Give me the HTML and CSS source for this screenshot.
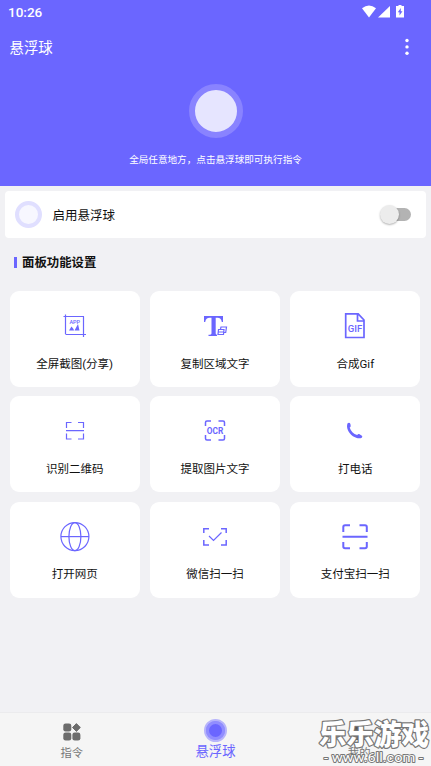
FILE: index.html
```html
<!DOCTYPE html>
<html lang="zh-CN">
<head>
<meta charset="utf-8">
<title>悬浮球</title>
<link rel="stylesheet" href="styles.css">
</head>
<body>
<div class="app">
  <header class="header">
    <div class="status">
      <span class="time">10:26</span>
      <svg class="status-icons" width="46" height="14" viewBox="0 0 46 14" fill="#fff">
        <path d="M0 3.200Q7-2.400 14 3.200L7 12.500z"/><path d="M28 1v11.500H16z"/>
        <path fill-rule="evenodd" d="M36.500 0h3v1H42v11.500h-8V1h2.500zM38.800 3l-3 4.300h1.700v3.200l3-4.300h-1.700z"/>
      </svg>
    </div>
    <div class="toolbar">
      <h1 class="title">悬浮球</h1>
      <svg class="more" width="4" height="18" viewBox="0 0 4 18" fill="#fff"><circle cx="2" cy="2.500" r="1.700"/><circle cx="2" cy="8.900" r="1.700"/><circle cx="2" cy="15.300" r="1.700"/></svg>
    </div>
    <div class="ball"></div>
    <p class="caption">全局任意地方，点击悬浮球即可执行指令</p>
  </header>
  <main class="main">
    <section class="enable">
      <span class="ring"></span>
      <span class="enable-label">启用悬浮球</span>
      <span class="switch"></span>
    </section>
    <h2 class="section-title">面板功能设置</h2>
    <section class="grid">
      <div class="card">
        <svg class="icon" viewBox="0 0 32 32"><path class="thin" d="M4.500 6.500h20.500M6.500 4.500v19.500M24.500 6.500V27M6.500 24.500H27"/><text class="app-text" x="15.800" y="13.800">APP</text><path class="solid" d="M10 20.500l2.500-4 2 2.500.5 1.500zM15.500 20.500l3.500-6.500 1.500 6.500z"/></svg>
        <span>全屏截图(分享)</span>
      </div>
      <div class="card">
        <svg class="icon" viewBox="0 0 32 32"><path class="solid" d="M5 6h19v6h-1.200c-.6-3-1.800-4.300-4.300-4.300h-1.800v15.500c0 1 .8 1.600 2.300 1.600V26h-9.500v-1.200c2 0 3-.6 3-1.600V7.700h-1.700C8 7.700 6.800 9 6.200 12H5z"/><path class="backdrop" d="M18 16h10v11H18z"/><path class="thin" d="M19.500 19.500h5.500l-.5 5h-5.500zM21.500 19l.5-2h5.500l-.8 5.500h-1.700M19.500 22h5"/></svg>
        <span>复制区域文字</span>
      </div>
      <div class="card">
        <svg class="icon" viewBox="0 0 32 32"><path class="mid" d="M6.700 3.800H19.200L25 10V27.500H6.700zM18.500 4v7H25"/><text class="gif-text" x="16" y="21.500">GIF</text></svg>
        <span>合成Gif</span>
      </div>
      <div class="card">
        <svg class="icon" viewBox="0 0 32 32"><path class="thin" d="M7.500 13V7.500h5M19 7.500h5.500V13M24.500 18.500V24H19M12.500 24h-5v-5.500M7 15.600h18"/></svg>
        <span>识别二维码</span>
      </div>
      <div class="card">
        <svg class="icon" viewBox="0 0 32 32"><path class="scan" d="M6.500 11V7.500Q6.500 6 8 6h4M19.500 6H24q1.500 0 1.500 1.500V11M25.500 20v3.500Q25.500 25 24 25h-4.500M12 25H8q-1.500 0-1.500-1.500V20"/><text class="ocr-text" x="16" y="18.600" textLength="16.500" lengthAdjust="spacingAndGlyphs">OCR</text></svg>
        <span>提取图片文字</span>
      </div>
      <div class="card">
        <svg class="icon" viewBox="0 0 32 32"><path class="solid" d="M8.600 8.300q2-1.200 2.800.7l.3 1.900q0 1-1 1.500c1 3.500 3.800 6.500 7.500 7.500q1-1.300 2-.8l2.700 1.600q1 .8-.2 2c-2 1.200-5.800.4-8.800-1.500-4.200-3-7.200-8.500-5.300-12.900z"/></svg>
        <span>打电话</span>
      </div>
      <div class="card">
        <svg class="icon" viewBox="0 0 32 32"><g class="thin"><circle cx="15.900" cy="15.600" r="14"/><ellipse cx="15.900" cy="15.600" rx="6" ry="14"/><path d="M2 15.600h28"/></g></svg>
        <span>打开网页</span>
      </div>
      <div class="card">
        <svg class="icon" viewBox="0 0 32 32"><path class="scan" d="M4.800 12V7.800H10M22 7.800h5.200V12M27.200 19v5H22M10 24H4.800v-5"/><path class="thin" d="M10 15l4.500 4.500 8-8"/></svg>
        <span>微信扫一扫</span>
      </div>
      <div class="card">
        <svg class="icon" viewBox="0 0 32 32"><path class="heavy" d="M4.300 11V6q0-1.800 1.800-1.800H11M20.500 4.200H26q1.800 0 1.800 1.800v5M27.800 21v4.500q0 1.800-1.800 1.800h-5.500M11 27.300H6.100q-1.800 0-1.800-1.800V21M3.500 15.700h25"/></svg>
        <span>支付宝扫一扫</span>
      </div>
    </section>
  </main>
  <nav class="tabs">
    <div class="tab">
      <svg class="tab-icon" width="18" height="18" viewBox="0 0 18 18" fill="#6c6c6c"><rect x=".3" y=".5" width="8" height="8" rx="2.300"/><path d="M13.400.6l3.900 3.900-3.900 3.900-3.900-3.900z" stroke="#6c6c6c" stroke-linejoin="round"/><rect x=".3" y="9.500" width="8" height="8" rx="2.300"/><rect x="9.400" y="9.500" width="8" height="8" rx="2.300"/></svg>
      <span>指令</span>
    </div>
    <div class="tab active">
      <span class="tab-ball"></span>
      <span>悬浮球</span>
    </div>
    <div class="tab">
      <svg class="tab-icon" width="18" height="18" viewBox="0 0 18 18" fill="#555"><rect x="4" y="2.500" width="10" height="7" rx="2"/><path d="M2 17q0-7 7-7t7 7z"/></svg>
      <span>我的</span>
    </div>
    <svg class="watermark" width="115" height="52" viewBox="0 0 115 52">
      <text class="mark-name" x="3" y="30.500" textLength="110" lengthAdjust="spacingAndGlyphs">乐乐游戏</text>
      <text class="mark-url" x="8" y="47.500" textLength="99" lengthAdjust="spacingAndGlyphs">- www.6ll.com -</text>
    </svg>
  </nav>
</div>
</body>
</html>
```
FILE: styles.css
```css
* { box-sizing: border-box; }

body {
  margin: 0;
  font-family: Roboto, "Noto Sans CJK SC", sans-serif;
  color: #111;
}

.app {
  display: flex;
  flex-direction: column;
  width: 431px;
  height: 766px;
  overflow: hidden;
  background: #f1f1f4;
}

.header {
  display: flex;
  flex-direction: column;
  align-items: center;
  height: 186px;
  background: #6b66ff;
  color: #fff;
}

.status {
  display: flex;
  align-self: stretch;
  justify-content: space-between;
  align-items: center;
  height: 24px;
  padding: 0 23px 0 8px;
}

.time { font-size: 13.500px; font-weight: 500; }
.status-icons { margin-top: -1px; }

.toolbar {
  display: flex;
  align-self: stretch;
  justify-content: space-between;
  align-items: center;
  height: 46px;
  padding: 0 22px 0 9.500px;
}

.title { margin: -2px 0 0; font-size: 14.400px; font-weight: 400; }

.ball {
  width: 54px;
  height: 54px;
  margin-top: 14px;
  border: 6.500px solid #8983ff;
  border-radius: 50%;
  background: #e6e5ff;
}

.caption { margin: 14.500px 0 0; font-size: 9.600px; line-height: 14px; }

.main { flex: 1; padding: 5px 5px 0; }

.enable {
  display: flex;
  align-items: center;
  height: 47px;
  padding: 0 15px 0 10px;
  border-radius: 4px;
  background: #fff;
}

.ring {
  width: 27px;
  height: 27px;
  border: 4px solid #e0dfff;
  border-radius: 50%;
  background: #f7f7ff;
}

.enable-label { flex: 1; margin-left: 10.500px; font-size: 12.500px; }

.switch {
  position: relative;
  width: 26px;
  height: 13px;
  border-radius: 7px;
  background: #b3b3b3;
}

.switch::before {
  content: "";
  position: absolute;
  left: -5px;
  top: -3px;
  width: 19px;
  height: 19px;
  border-radius: 50%;
  background: #ececec;
  box-shadow: 0 1px 2px rgba(0, 0, 0, .3);
}

.section-title {
  display: flex;
  align-items: center;
  gap: 5px;
  height: 20px;
  margin: 14px 0 19px 9px;
  font-size: 12.400px;
  font-weight: 700;
}

.section-title::before {
  content: "";
  width: 3px;
  height: 11px;
  background: #6b66ff;
}

.grid {
  display: grid;
  grid-template-columns: repeat(3, 1fr);
  grid-auto-rows: 96px;
  gap: 9.400px 10px;
  padding: 0 5.500px 0 4.500px;
}

.card {
  display: flex;
  flex-direction: column;
  align-items: center;
  padding-top: 19px;
  border-radius: 9px;
  background: #fff;
  font-size: 11.500px;
  line-height: 18px;
}

.icon {
  width: 32px;
  height: 32px;
  margin-bottom: 12.500px;
  fill: none;
  stroke: #6b66ff;
}

.icon text { fill: #6b66ff; stroke: none; text-anchor: middle; }
.thin { stroke-width: 1.200; }
.scan { stroke-width: 1.500; }
.mid { stroke-width: 1.700; }
.heavy { stroke-width: 2; }
.solid { fill: #6b66ff; stroke: none; }
.backdrop { fill: #fff; stroke: none; }
.app-text { font-size: 5.500px; font-weight: 500; }
.gif-text { font-size: 9.500px; font-weight: 500; }
.ocr-text { font-size: 8.500px; font-weight: 700; }

.tabs {
  position: relative;
  display: grid;
  grid-template-columns: repeat(3, 1fr);
  height: 54px;
  border-top: 1px solid #ebebed;
  background: #f5f5f5;
}

.tab {
  display: flex;
  flex-direction: column;
  align-items: center;
  padding-top: 10px;
  color: #777;
  font-size: 11.300px;
  line-height: 18px;
}

.tab-icon { margin-bottom: 4px; }

.active {
  padding-top: 5.500px;
  color: #6b66ff;
  font-size: 13.300px;
}

.tab-ball {
  width: 23px;
  height: 23px;
  margin-bottom: 1.500px;
  border: 2px solid #b7b4fb;
  border-radius: 50%;
  background: #6b66ff;
  box-shadow: inset 0 0 0 3px #918dff;
}

.watermark { position: absolute; right: 0; bottom: 0; }

.watermark text {
  fill: #fff;
  stroke: #777;
  paint-order: stroke;
  stroke-linejoin: round;
}

.mark-name { font-size: 28.500px; font-weight: 900; stroke-width: 2.500; }
.mark-url { font-size: 12.500px; stroke-width: 1.800; }
```
